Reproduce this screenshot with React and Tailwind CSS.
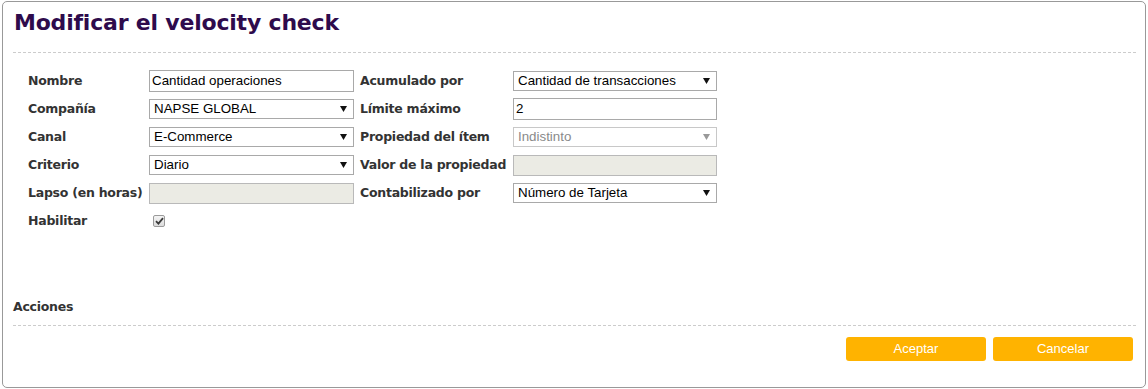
import React from "react";

const label = "text-[12.5px] tracking-[-0.25px] font-bold text-[#333333] whitespace-nowrap";
const fieldFont = { fontFamily: '"Liberation Sans", Arial, sans-serif' };

function Arrow({ disabled }) {
  return (
    <svg width="7" height="6" viewBox="0 0 7 6" className="shrink-0">
      <path d="M0 0 H7 L3.5 6 Z" fill={disabled ? "#999999" : "#111111"} />
    </svg>
  );
}

function TextInput({ value, w = "w-[205px]" }) {
  return (
    <div
      className={`${w} h-[22px] border border-[#a9a9a9] bg-white flex items-center px-[2px] text-[13.33px] text-black`}
      style={fieldFont}
    >
      {value}
    </div>
  );
}

function Select({ value, disabled, w = "w-[205px]" }) {
  return (
    <div
      className={`${w} h-[20px] border flex items-center justify-between pl-[4px] pr-[6px] text-[13.33px] ${
        disabled ? "border-[#c8c8c8] text-[#8a8a8a] bg-white" : "border-[#a9a9a9] text-black bg-white"
      }`}
      style={fieldFont}
    >
      <span>{value}</span>
      <Arrow disabled={disabled} />
    </div>
  );
}

function Disabled({ w = "w-[205px]" }) {
  return <div className={`${w} h-[21px] border border-[#b9b9b9] bg-[#ebebe4]`} />;
}

function Row({ children }) {
  return <div className="h-[28px] flex items-center">{children}</div>;
}

export default function App() {
  return (
    <div className="w-[1148px] h-[389px] bg-white pt-[1px] pl-[2px]" style={{ fontFamily: '"DejaVu Sans", Verdana, sans-serif' }}>
      <div className="w-[1144px] h-[387px] border border-[#999999] rounded-[5px] px-[10px] pt-[8px] flex flex-col">
        <h1 className="text-[22px] leading-[26px] font-bold text-[#2e0b4c] ml-[1px] tracking-[-0.2px]">Modificar el velocity check</h1>
        <div className="mt-[16px] border-t border-dashed border-[#cccccc] mr-[-1px]" />
        <div className="flex pl-[15px] pt-[14px]">
          <div className="flex flex-col">
            <Row><div className={`${label} w-[121px]`}>Nombre</div><TextInput value="Cantidad operaciones" /></Row>
            <Row><div className={`${label} w-[121px]`}>Compañía</div><Select value="NAPSE GLOBAL" /></Row>
            <Row><div className={`${label} w-[121px]`}>Canal</div><Select value="E-Commerce" /></Row>
            <Row><div className={`${label} w-[121px]`}>Criterio</div><Select value="Diario" /></Row>
            <Row><div className={`${label} w-[121px]`}>Lapso (en horas)</div><Disabled /></Row>
            <Row>
              <div className={`${label} w-[121px]`}>Habilitar</div>
              <div className="ml-[4px] w-[12px] h-[12px] border border-[#9a9a9a] rounded-[2px] bg-gradient-to-b from-[#f4f4f4] to-[#dcdcdc] flex items-center justify-center">
                <svg width="9" height="8" viewBox="0 0 9 8">
                  <path d="M1 4.2 L3.4 6.6 L8 1.2" fill="none" stroke="#3a3a3a" strokeWidth="1.8" />
                </svg>
              </div>
            </Row>
          </div>
          <div className="flex flex-col ml-[6px]">
            <Row><div className={`${label} w-[153px]`}>Acumulado por</div><Select w="w-[204px]" value="Cantidad de transacciones" /></Row>
            <Row><div className={`${label} w-[153px]`}>Límite máximo</div><TextInput w="w-[204px]" value="2" /></Row>
            <Row><div className={`${label} w-[153px]`}>Propiedad del ítem</div><Select w="w-[204px]" value="Indistinto" disabled /></Row>
            <Row><div className={`${label} w-[153px]`}>Valor de la propiedad</div><Disabled w="w-[204px]" /></Row>
            <Row><div className={`${label} w-[153px]`}>Contabilizado por</div><Select w="w-[204px]" value="Número de Tarjeta" /></Row>
          </div>
        </div>
        <div className="mt-[64px] text-[12.5px] tracking-[-0.25px] font-bold text-[#333333] leading-[16px]">Acciones</div>
        <div className="mt-[10px] border-t border-dashed border-[#cccccc] mr-[-1px]" />
        <div className="flex justify-end gap-[7px] mt-[11px] mr-[2px]">
          <button className="w-[140px] h-[24px] rounded-[3px] bg-[#ffb300] text-white text-[13px]" style={fieldFont}>Aceptar</button>
          <button className="w-[140px] h-[24px] rounded-[3px] bg-[#ffb300] text-white text-[13px]" style={fieldFont}>Cancelar</button>
        </div>
      </div>
    </div>
  );
}
